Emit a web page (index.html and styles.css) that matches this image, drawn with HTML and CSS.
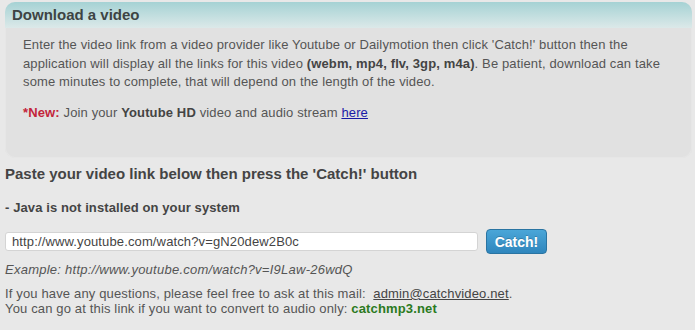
FILE: index.html
```html
<!DOCTYPE html>
<html>
<head>
<meta charset="utf-8">
<link rel="stylesheet" href="styles.css">
</head>
<body>
<div class="box">
  <div class="box-head">Download a video</div>
  <div class="box-body">
    <p>Enter the video link from a video provider like Youtube or Dailymotion then click 'Catch!' button then the application will display all the links for this video <b>(webm, mp4, flv, 3gp, m4a)</b>. Be patient, download can take some minutes to complete, that will depend on the length of the video.</p>
    <p><span class="new">*New:</span> Join your <b>Youtube HD</b> video and audio stream <a href="#">here</a></p>
  </div>
</div>
<h2 class="paste">Paste your video link below then press the 'Catch!' button</h2>
<div class="java">- Java is not installed on your system</div>
<div class="form">
  <input class="url" type="text" value="http://www.youtube.com/watch?v=gN20dew2B0c">
  <button class="catch">Catch!</button>
</div>
<div class="example">Example: http://www.youtube.com/watch?v=I9Law-26wdQ</div>
<div class="info">
  <div>If you have any questions, please feel free to ask at this mail:&nbsp; <a class="mail" href="#">admin@catchvideo.net</a>.</div>
  <div>You can go at this link if you want to convert to audio only: <a class="mp3" href="#">catchmp3.net</a></div>
</div>
</body>
</html>
```

FILE: styles.css
```css
html, body {
  margin: 0;
  padding: 0;
  background: #e8e8e8;
  font-family: "Liberation Sans", Arial, sans-serif;
  color: #555;
}
body {
  width: 695px;
  height: 330px;
  overflow: hidden;
}
.box {
  margin: 2px 3px 0 5px;
  height: 156px;
  border-radius: 10px;
  background: #e1e1e1;
  box-shadow: inset 0 0 0 1px #e6e6e6;
  overflow: hidden;
}
.box-head {
  height: 26px;
  background: linear-gradient(#a5d2d4, #dce9e9);
  font-size: 15px;
  font-weight: bold;
  color: #3d4444;
  padding: 4px 0 0 7px;
  box-sizing: border-box;
  line-height: 18px;
}
.box-body {
  padding: 8px 10px 0 18px;
  font-size: 13px;
  line-height: 18.5px;
  letter-spacing: 0.13px;
}
.box-body p {
  margin: 0 0 12px 0;
}
.box-body p.intro {
  max-width: 650px;
}
.box-body b {
  color: #444;
}
.new {
  color: #c3243a;
  font-weight: bold;
}
.box-body a {
  color: #1a1aa6;
}
.paste {
  margin: 7px 0 0 5px;
  font-size: 15px;
  font-weight: bold;
  color: #444;
  line-height: 18px;
}
.java {
  margin: 17px 0 0 5px;
  font-size: 13px;
  font-weight: bold;
  color: #444;
  line-height: 16px;
  letter-spacing: 0.1px;
}
.form {
  display: flex;
  align-items: center;
  margin: 13px 0 0 5px;
  gap: 8px;
}
.url {
  width: 473px;
  height: 19px;
  box-sizing: border-box;
  border: 1px solid #d4d4d4;
  border-radius: 3px;
  background: #fff;
  padding: 0 6px;
  font-family: "Liberation Sans", Arial, sans-serif;
  font-size: 13px;
  letter-spacing: 0.13px;
  color: #444;
}
.catch {
  width: 61px;
  height: 25px;
  border: 1px solid #2a74a2;
  border-radius: 4px;
  background: linear-gradient(#4aa6d8, #2f86bd);
  color: #fff;
  font-family: "Liberation Sans", Arial, sans-serif;
  font-size: 14px;
  font-weight: bold;
  padding: 0;
  text-shadow: 0 -1px 0 rgba(0,0,0,0.2);
}
.example {
  margin: 8px 0 0 5px;
  font-size: 13px;
  font-style: italic;
  color: #555;
  line-height: 16px;
  letter-spacing: 0.25px;
}
.info {
  margin: 8px 0 0 5px;
  font-size: 13px;
  line-height: 15px;
  color: #555;
  letter-spacing: 0.15px;
}
.mail {
  color: #444;
}
.mp3 {
  color: #2b7a1e;
  font-weight: bold;
  text-decoration: none;
}
```
